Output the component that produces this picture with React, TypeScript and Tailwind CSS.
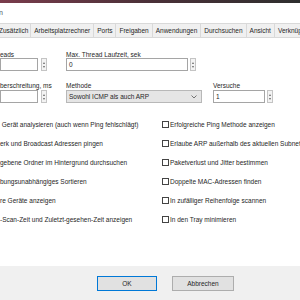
import React from "react";

const font = { fontFamily: '"Liberation Sans", Arial, sans-serif' };

function Spin() {
  return (
    <div className="w-[6px] h-[13px] border border-[#c4c4c4] bg-[#f3f3f3] flex flex-col items-center justify-center gap-[2px] shrink-0">
      <div className="w-0 h-0 border-l-[1.5px] border-r-[1.5px] border-b-[2px] border-l-transparent border-r-transparent border-b-[#666]" />
      <div className="w-0 h-0 border-l-[1.5px] border-r-[1.5px] border-t-[2px] border-l-transparent border-r-transparent border-t-[#666]" />
    </div>
  );
}

function Box() {
  return <div className="w-[7px] h-[7px] border border-[#444] bg-white shrink-0" />;
}

const tabs = ["Zusätzlich", "Arbeitsplatzrechner", "Ports", "Freigaben", "Anwendungen", "Durchsuchen", "Ansicht", "Verknüpfungen"];

const left = [
  " Gerät analysieren (auch wenn Ping fehlschlägt)",
  "erk und Broadcast Adressen pingen",
  "gebene Ordner im Hintergrund durchsuchen",
  "bungsunabhängiges Sortieren",
  "re Geräte anzeigen",
  "-Scan-Zeit und Zuletzt-gesehen-Zeit anzeigen",
];

const right = [
  "Erfolgreiche Ping Methode anzeigen",
  "Erlaube ARP außerhalb des aktuellen Subnetzes",
  "Paketverlust und Jitter bestimmen",
  "Doppelte MAC-Adressen finden",
  "In zufälliger Reihenfolge scannen",
  "In den Tray minimieren",
];

export default function App() {
  return (
    <div style={font} className="w-[300px] h-[300px] overflow-hidden bg-white text-[6.5px] leading-[8px] text-[#262626] flex flex-col">
      {/* window edge / desktop behind */}
      <div className="h-[3px] bg-gradient-to-r from-[#7a3c4c] via-[#4a3038] to-[#2e2e2e]" />
      {/* title bar */}
      <div className="h-[20px] flex items-center text-[7px]">
        <span className="-ml-[1px] text-[#555]">n</span>
      </div>

      {/* tabs */}
      <div className="h-[14px] flex items-stretch bg-[#f7f7f7] whitespace-nowrap overflow-hidden">
        {tabs.map((t, i) => (
          <div
            key={t}
            className={`px-[3px] flex items-center border-r border-t border-[#d9d9d9] bg-[#f0f0f0] shrink-0 ${i === 0 ? "-ml-[4px] pr-[2px]" : ""}`}
          >
            {t}
          </div>
        ))}
      </div>

      {/* tab page */}
      <div className="flex-1 flex flex-col border-t border-[#d9d9d9]">
        <div className="pt-[13px] flex">
          <div className="w-[66px] flex flex-col shrink-0">
            <div className="h-[7px] leading-[7px]">eads</div>
            <div className="flex items-center gap-[3px]">
              <div className="w-[38px] h-[13px] border border-[#a5a5a5] bg-white" />
              <Spin />
            </div>
          </div>
          <div className="flex flex-col">
            <div className="h-[7px] leading-[7px]">Max. Thread Laufzeit, sek</div>
            <div className="flex items-center gap-[2px]">
              <div className="w-[122px] h-[13px] border border-[#a5a5a5] bg-white pl-[2px] flex items-center">0</div>
              <Spin />
            </div>
          </div>
        </div>

        <div className="mt-[11px] flex">
          <div className="w-[66px] flex flex-col shrink-0">
            <div className="h-[8px]">berschreitung, ms</div>
            <div className="flex items-center gap-[3px]">
              <div className="w-[38px] h-[13px] border border-[#a5a5a5] bg-white" />
              <Spin />
            </div>
          </div>
          <div className="w-[147px] flex flex-col shrink-0">
            <div className="h-[8px]">Methode</div>
            <div className="w-[136px] h-[13px] border border-[#b8b8b8] bg-[#e5e5e5] flex items-center justify-between pl-[2px] pr-[4px]">
              <span>Sowohl ICMP als auch ARP</span>
              <svg width="6" height="4" viewBox="0 0 6 4">
                <path d="M0.5 0.5 L3 3 L5.5 0.5" fill="none" stroke="#555" strokeWidth="0.8" />
              </svg>
            </div>
          </div>
          <div className="flex flex-col">
            <div className="h-[8px]">Versuche</div>
            <div className="flex items-center gap-[2px]">
              <div className="w-[52px] h-[13px] border border-[#a5a5a5] bg-white pl-[2px] flex items-center">1</div>
              <Spin />
            </div>
          </div>
        </div>

        <div className="mt-[12px] flex whitespace-nowrap">
          <div className="w-[162px] flex flex-col shrink-0">
            {left.map((t) => (
              <div key={t} className="h-[19px] flex items-center whitespace-pre">{t}</div>
            ))}
          </div>
          <div className="flex flex-col">
            {right.map((t) => (
              <div key={t} className="h-[19px] flex items-center gap-[1px]">
                <Box />
                <span>{t}</span>
              </div>
            ))}
          </div>
        </div>
      </div>

      {/* footer */}
      <div className="h-[34px] bg-[#f0f0f0] flex justify-center items-start pt-[10px] gap-[15px] pl-[31px] shrink-0">
        <div className="w-[60px] h-[15px] border border-[#0078d7] bg-[#e1e1e1] flex items-center justify-center">OK</div>
        <div className="w-[62px] h-[15px] border border-[#adadad] bg-[#e1e1e1] flex items-center justify-center">Abbrechen</div>
      </div>
    </div>
  );
}
